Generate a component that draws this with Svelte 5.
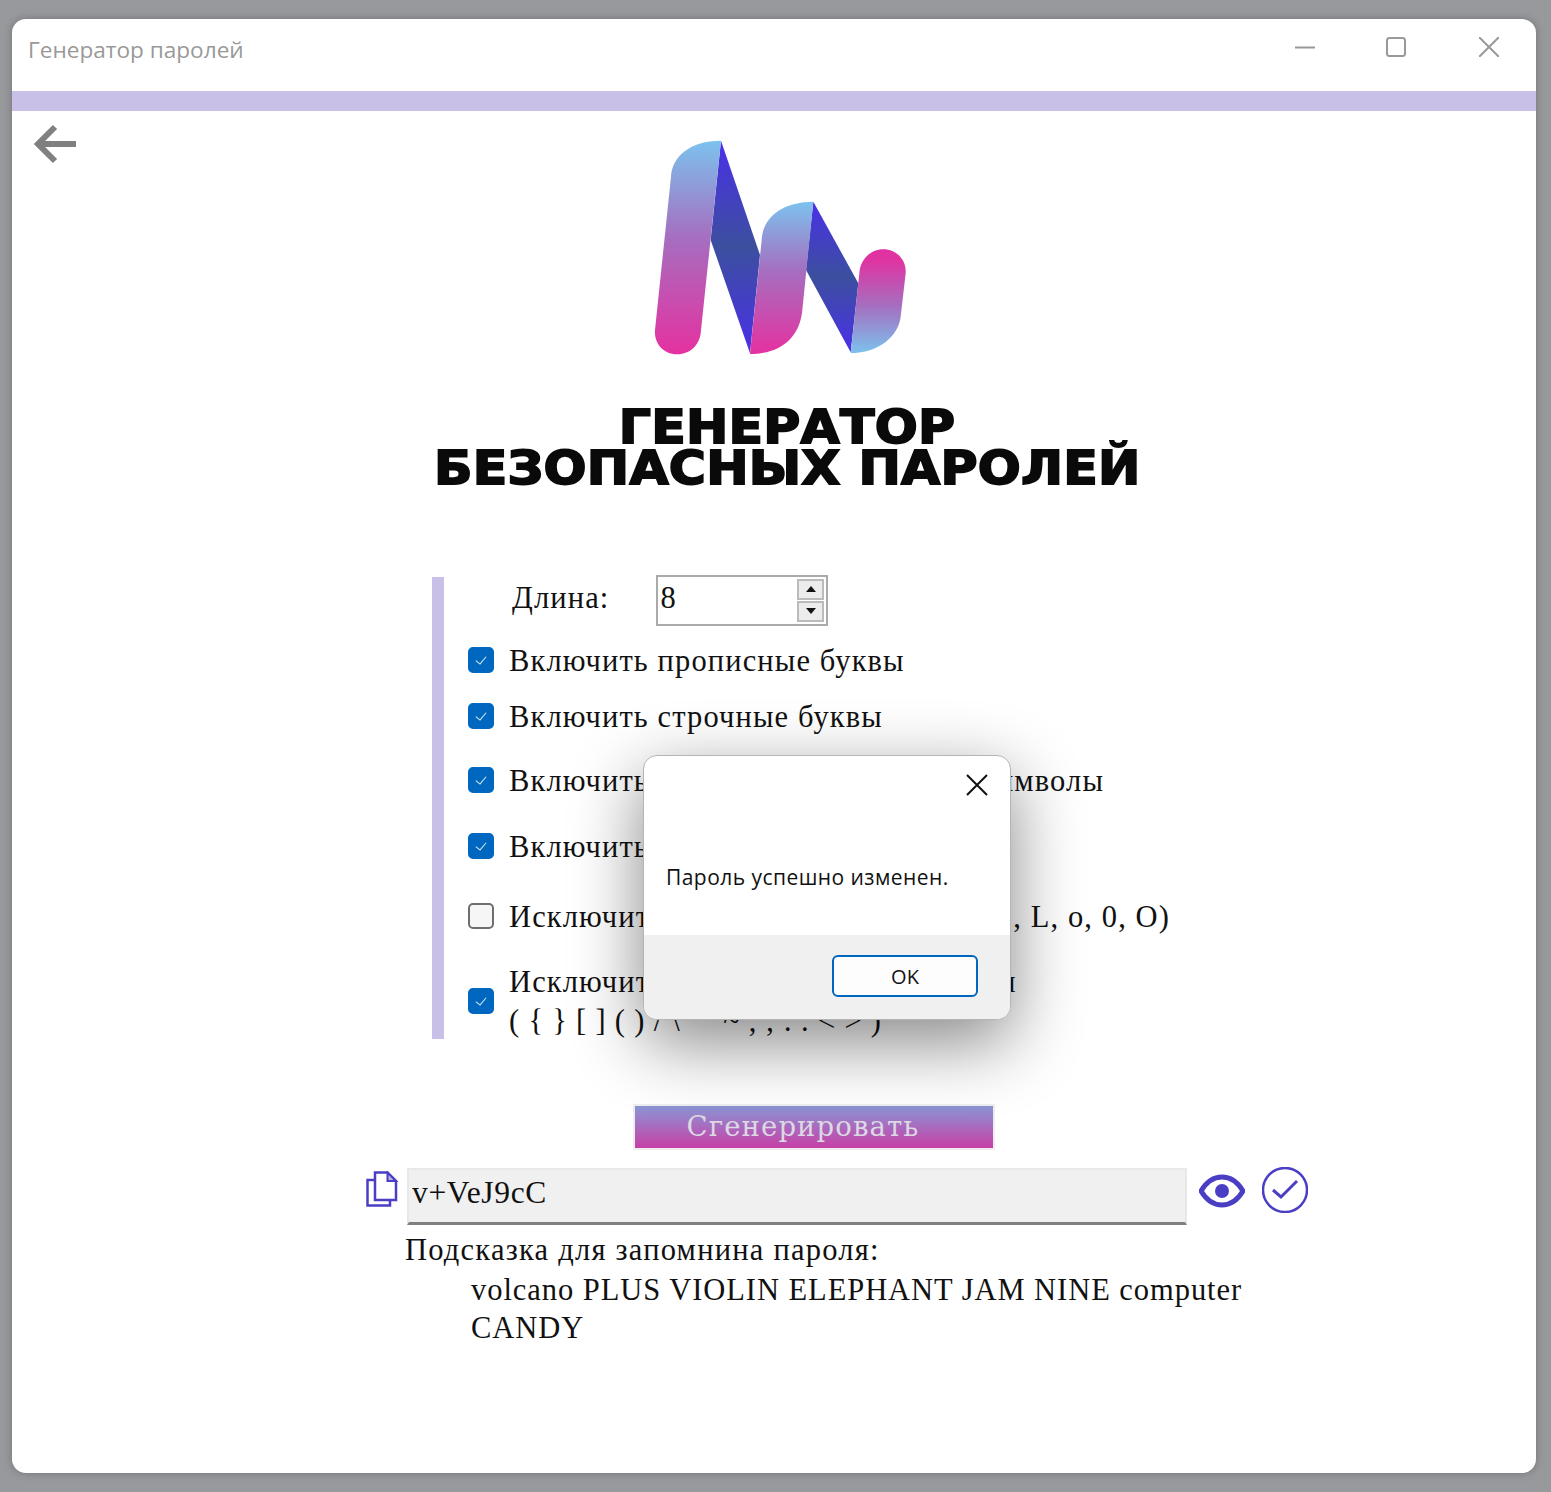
<script lang="ts">
  interface Option {
    label: string;
    sub?: string;
    checked: boolean;
    gap: number;
  }

  let length = $state(8);
  let password = $state("v+VeJ9cC");

  let options: Option[] = $state([
    { label: "Включить прописные буквы", checked: true, gap: 16 },
    { label: "Включить строчные буквы", checked: true, gap: 16 },
    { label: "Включить номера и специальные символы", checked: true, gap: 24 },
    { label: "Включить пробелы", checked: true, gap: 26 },
    { label: "Исключить похожие символы (i, l, 1, L, o, 0, O)", checked: false, gap: 30 },
    { label: "Исключить неоднозначные символы", sub: "( { } [ ] ( ) / \\ ' ` ~ , ; : . < > )", checked: true, gap: 28 },
  ]);
</script>

<div class="window">
  <header class="titlebar">
    <span class="title">Генератор паролей</span>
    <div class="controls">
      <svg width="20" height="20" viewBox="0 0 20 20"><path d="M0 10.5h20" /></svg>
      <svg width="20" height="20" viewBox="0 0 20 20"><rect x="1" y="1" width="18" height="18" rx="2.5" /></svg>
      <svg width="20" height="20" viewBox="0 0 20 20"><path d="M0 0l20 20M20 0L0 20" /></svg>
    </div>
  </header>
  <div class="accent"></div>

  <main class="content">
    <div class="hero">
      <svg class="back" width="44" height="40" viewBox="0 0 44 40">
        <path d="M42 20H6M21 3L4 20l17 17" />
      </svg>
      <svg class="logo" width="280" height="250" viewBox="0 0 840 750">
        <defs>
          <linearGradient id="down" x1="0" y1="0" x2="0" y2="1">
            <stop offset="0" stop-color="#7cc2ee" />
            <stop offset="0.45" stop-color="#a56fc0" />
            <stop offset="1" stop-color="#e531a0" />
          </linearGradient>
          <linearGradient id="up" x1="0" y1="0" x2="0" y2="1">
            <stop offset="0.1" stop-color="#e033a2" />
            <stop offset="0.55" stop-color="#a56fc0" />
            <stop offset="1" stop-color="#7cc2ee" />
          </linearGradient>
          <linearGradient id="band" x1="0" y1="0" x2="0" y2="1">
            <stop offset="0" stop-color="#4a30e8" />
            <stop offset="0.5" stop-color="#3c4f9e" />
            <stop offset="1" stop-color="#4a30e8" />
          </linearGradient>
        </defs>
        <path fill="url(#band)" d="M243 62L360 405L330 700L212 360Z" />
        <path fill="url(#band)" d="M520 245L655 490L632 697L498 450Z" />
        <path fill="url(#down)" d="M243 62C150 62 96 110 93 170L45 630C42 675 75 703 113 703C150 703 178 675 182 640Z" />
        <path fill="url(#down)" d="M520 245C430 245 368 290 365 360L330 702C425 702 480 650 487 570Z" />
        <path fill="url(#up)" d="M730 388C690 388 660 420 658 460L632 699C715 699 775 650 782 590L797 460C800 420 770 388 730 388Z" />
      </svg>
    </div>

    <h1 class="heading">
      <span>ГЕНЕРАТОР</span>
      <span>БЕЗОПАСНЫХ ПАРОЛЕЙ</span>
    </h1>

    <section class="options">
      <div class="length-row">
        <span>Длина:</span>
        <div class="number">
          <input type="text" bind:value={length} />
          <div class="spin">
            <button onclick={() => length++} aria-label="Больше"><i class="up"></i></button>
            <button onclick={() => length--} aria-label="Меньше"><i class="down"></i></button>
          </div>
        </div>
      </div>
      {#each options as o}
        <label class="option" style={`margin-top:${o.gap}px`}>
          <input type="checkbox" bind:checked={o.checked} />
          <span>
            {o.label}
            {#if o.sub}<span class="sub">{o.sub}</span>{/if}
          </span>
        </label>
      {/each}
    </section>

    <button class="generate">Сгенерировать</button>

    <div class="password-row">
      <svg class="copy" width="32" height="36" viewBox="0 0 32 36">
        <path d="M8 9H1.5v25.5H24V29" />
        <path d="M9 1.5h12.5l8.5 8.5v19H9z" />
        <path class="ear" d="M21.5 1.5V10H30z" />
      </svg>
      <input class="password" type="text" bind:value={password} />
      <svg class="eye" width="46" height="34" viewBox="0 0 46 34">
        <path d="M2 17C8 7 15 3 23 3s15 4 21 14c-6 10-13 14-21 14S8 27 2 17z" />
        <circle cx="23" cy="17" r="7" />
      </svg>
      <svg class="ok" width="46" height="46" viewBox="0 0 46 46">
        <circle cx="23" cy="23" r="22" />
        <path d="M11 23l8 7 16-16" />
      </svg>
    </div>

    <div class="hint">
      <div>Подсказка для запомнина пароля:</div>
      <p>volcano PLUS VIOLIN ELEPHANT JAM NINE computer CANDY</p>
    </div>
  </main>

  <div class="dialog">
    <div class="dialog-body">
      <svg class="dialog-close" width="22" height="22" viewBox="0 0 22 22"><path d="M1 1l20 20M21 1L1 21" /></svg>
      <p>Пароль успешно изменен.</p>
    </div>
    <div class="dialog-footer">
      <button>OK</button>
    </div>
  </div>
</div>

<style>
  :global(body) {
    margin: 0;
    background: #98999d;
  }

  .window {
    position: relative;
    box-sizing: border-box;
    height: 1454px;
    margin: 19px 15px 19px 12px;
    background: #fff;
    border-radius: 14px;
    box-shadow: 0 0 8px rgba(0, 0, 0, 0.25);
    overflow: hidden;
    font-family: "Liberation Serif", serif;
    color: #111;
  }

  .titlebar {
    display: flex;
    align-items: center;
    justify-content: space-between;
    height: 72px;
    padding: 0 37px 16px 16px;
    box-sizing: border-box;
  }

  .title {
    font-family: "Open Sans", sans-serif;
    font-size: 22.6px;
    color: #999;
    margin-top: 4px;
  }

  .controls {
    display: flex;
    gap: 72px;
  }

  .controls svg {
    fill: none;
    stroke: #999;
    stroke-width: 2;
  }

  .controls svg:nth-child(2) {
    margin: 0 1px 0 -1px;
  }

  .accent {
    height: 20px;
    background: #c8c0e6;
  }

  .hero {
    display: flex;
    align-items: flex-start;
    padding-top: 9px;
  }

  .back {
    margin: 4px 0 0 22px;
    fill: none;
    stroke: #808080;
    stroke-width: 6;
  }

  .logo {
    margin-left: 562px;
  }

  .heading {
    display: flex;
    flex-direction: column;
    align-items: center;
    margin: 37px 0 0 0;
    padding-left: 26px;
    font-family: "DejaVu Sans", sans-serif;
    font-size: 46px;
    font-weight: 700;
    line-height: 41px;
    color: #0a0a0a;
    letter-spacing: 0.2px;
    -webkit-text-stroke: 1.8px #0a0a0a;
  }

  .heading span {
    transform: scaleX(1.1);
  }

  .options {
    display: flex;
    flex-direction: column;
    height: 462px;
    margin: 88px 0 0 420px;
    width: 800px;
    box-sizing: border-box;
    border-left: 12px solid #c8c0e6;
    padding-left: 24px;
    font-size: 30.5px;
    letter-spacing: 1.12px;
  }

  .length-row {
    display: flex;
    align-items: center;
    height: 50px;
    margin-top: -2px;
    padding-left: 44px;
    gap: 47px;
  }

  .length-row > span {
    margin-top: -4px;
  }

  .number {
    display: flex;
    align-items: center;
    width: 172px;
    height: 51px;
    box-sizing: border-box;
    border: 2px solid #aaa;
    background: #fff;
  }

  .number input {
    width: 130px;
    border: 0;
    outline: 0;
    padding: 0 0 3px 2px;
    font: inherit;
    color: inherit;
  }

  .spin {
    display: flex;
    flex-direction: column;
    gap: 1px;
    margin-left: 7px;
  }

  .spin button {
    display: flex;
    align-items: center;
    justify-content: center;
    width: 27px;
    height: 21px;
    padding: 0;
    border: 2px solid #bbb;
    background: #ececec;
  }

  .spin i {
    width: 0;
    height: 0;
    border-left: 5px solid transparent;
    border-right: 5px solid transparent;
  }

  .spin .up {
    border-bottom: 6px solid #111;
  }

  .spin .down {
    border-top: 6px solid #111;
  }

  .option {
    display: flex;
    align-items: center;
    gap: 15px;
    min-height: 40px;
    line-height: 39px;
  }

  .sub {
    display: block;
    letter-spacing: 0.8px;
  }

  .option input {
    position: relative;
    flex-shrink: 0;
    appearance: none;
    width: 26px;
    height: 26px;
    margin: 0 0 2px;
    box-sizing: border-box;
    border: 2px solid #6e6e6e;
    border-radius: 5px;
    background: #f6f6f6;
  }

  .option input:checked {
    border-color: #0067c0;
    background: #0067c0;
  }

  .option input:checked::after {
    content: "";
    position: absolute;
    left: 8px;
    top: 5px;
    width: 5px;
    height: 9px;
    border: solid rgba(255, 255, 255, 0.85);
    border-width: 0 1.5px 1.5px 0;
    transform: rotate(40deg);
  }

  .generate {
    display: block;
    width: 362px;
    height: 46px;
    margin: 65px 0 0 621px;
    padding: 0 22px 2px 0;
    box-sizing: border-box;
    border: 2px solid #eee;
    background: linear-gradient(#8a96d6, #c83fa6);
    font-family: "DejaVu Serif", serif;
    font-size: 27.5px;
    letter-spacing: 1.1px;
    color: #dcd8e4;
  }

  .password-row {
    display: flex;
    align-items: flex-start;
    margin: 18px 0 0 354px;
  }

  .copy {
    margin: 3px 0 0 0;
    fill: none;
    stroke: #4a3fc4;
    stroke-width: 2.5;
  }

  .copy .ear {
    fill: #b9b3e8;
    stroke-width: 2;
  }

  .password {
    width: 780px;
    height: 57px;
    margin-left: 9px;
    box-sizing: border-box;
    padding: 0 0 6px 3px;
    border: 2px solid #e8e8e8;
    border-bottom: 3px solid #808080;
    background: #f0f0f0;
    font: inherit;
    font-size: 31.5px;
    letter-spacing: 0.65px;
    color: #111;
    outline: 0;
  }

  .eye {
    margin: 6px 0 0 12px;
    fill: none;
    stroke: #4a3fc4;
    stroke-width: 5;
  }

  .eye circle {
    fill: #4a3fc4;
    stroke: none;
  }

  .ok {
    margin: -1px 0 0 17px;
    fill: none;
    stroke: #4a3fc4;
    stroke-width: 2.5;
  }

  .ok path {
    stroke-width: 3;
  }

  .hint {
    margin: 6px 0 0 393px;
    font-size: 30.5px;
    letter-spacing: 1.23px;
    line-height: 38px;
  }

  .hint p {
    width: 790px;
    margin: 2px 0 0 66px;
    letter-spacing: 0.95px;
  }

  .dialog {
    position: absolute;
    left: 631px;
    top: 736px;
    display: flex;
    flex-direction: column;
    width: 368px;
    height: 265px;
    box-sizing: border-box;
    border: 1.5px solid #b5b5b5;
    border-radius: 14px;
    background: #fff;
    overflow: hidden;
    box-shadow: 0 22px 70px rgba(0, 0, 0, 0.48);
    font-family: "Open Sans", sans-serif;
  }

  .dialog-body {
    position: relative;
    flex: 1;
    display: flex;
    align-items: flex-end;
    padding: 0 22px 44px;
  }

  .dialog-body p {
    margin: 0;
    font-size: 21px;
    letter-spacing: 0.45px;
    line-height: 28px;
    color: #111;
  }

  .dialog-close {
    position: absolute;
    right: 22px;
    top: 18px;
    fill: none;
    stroke: #111;
    stroke-width: 2;
  }

  .dialog-footer {
    display: flex;
    align-items: center;
    justify-content: flex-end;
    height: 84px;
    padding: 0 32px 2px 0;
    box-sizing: border-box;
    background: #f0f0f0;
  }

  .dialog-footer button {
    width: 146px;
    height: 42px;
    box-sizing: border-box;
    border: 2px solid #0067c0;
    border-radius: 6px;
    background: #fdfdfd;
    font: inherit;
    font-size: 20px;
    color: #111;
  }
</style>
